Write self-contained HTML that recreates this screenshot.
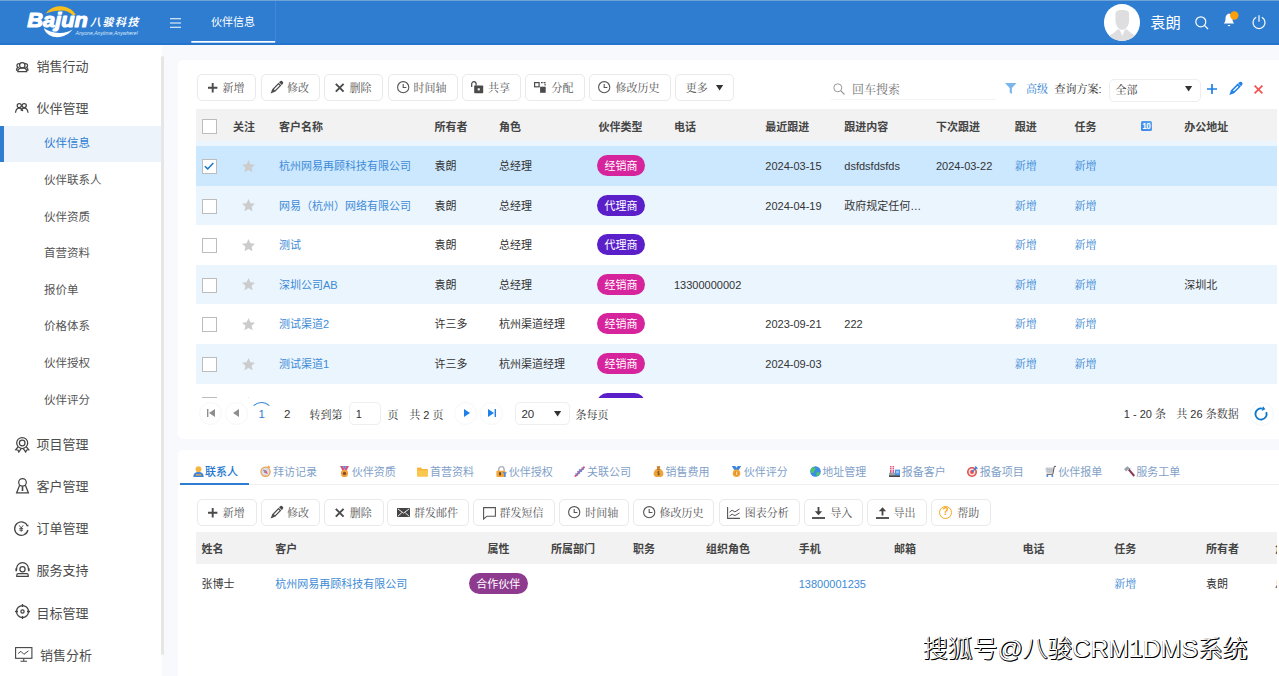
<!DOCTYPE html>
<html lang="zh-CN">
<head>
<meta charset="utf-8">
<title>伙伴信息</title>
<style>
*{box-sizing:border-box;margin:0;padding:0}
html,body{width:1279px;height:676px;overflow:hidden}
body{position:relative;background:#f7f9fc;font-family:"Liberation Sans","Noto Sans CJK SC",sans-serif;font-size:11px;color:#333}
.abs{position:absolute}
svg{display:block;overflow:visible;position:absolute}
/* header */
#hd{z-index:5;position:absolute;left:0;top:0;width:1279px;height:45px;background:#2e7dd1;border-top:1px solid #6fa2d6;border-bottom:2px solid #2474cd}
#hd .tab{position:absolute;left:190px;top:0;width:86px;height:42px;border-right:1px solid #4388d6;border-left:1px solid #2e7dd1;color:#fff;font-size:11px;line-height:43.400px;text-align:center}
/* sidebar */
#sb{position:absolute;left:0;top:44px;width:162px;height:632px;background:#fff}
#sb .m{position:absolute;left:36.500px;margin-top:.5px;font-size:13px;color:#4d4d4d;line-height:20px;height:20px;white-space:nowrap}
#sb .s{position:absolute;left:44px;font-size:11.5px;color:#555;line-height:20px;height:20px;white-space:nowrap}
#sb .act{position:absolute;left:0;top:82px;width:162px;height:36px;background:#edf3fa;border-left:4px solid #2e7dd1}
#sbar{position:absolute;left:161px;top:56px;width:3.300px;height:599px;background:#e6e6e6;border-radius:2px}
/* cards */
.card{position:absolute;background:#fff;border-radius:5px 0 0 5px;overflow:hidden}
.sf,.btn{font-family:"Liberation Sans","Noto Serif CJK SC",serif}
.btn{position:absolute;height:27px;border:1px solid #e9e9e9;border-radius:5px;background:#fff;color:#555;font-size:11px;line-height:25px;white-space:nowrap}
.btn span{position:absolute;top:1px;margin-left:-.5px}
.th{position:absolute;font-weight:bold;color:#444;font-size:11px;line-height:16px;white-space:nowrap}
.td{position:absolute;color:#333;font-size:11px;line-height:16px;white-space:nowrap}
.lk{color:#3d8bd6}
.lk.sf{color:#3383d2}
.cb{position:absolute;width:15px;height:15px;border:1px solid #bcbcbc;background:#fff}
.bdg{position:absolute;height:21px;border-radius:11px;color:#fff;font-size:11px;line-height:22.400px;text-align:center;white-space:nowrap}
.row{position:absolute;left:0;width:1081px}
.circ{position:absolute;width:23px;height:23px;border-radius:50%;border:1px solid #f7f7f7;background:#fff}
.tabt{position:absolute;font-size:11px;line-height:16px;color:#7f9fc8;white-space:nowrap}
</style>
</head>
<body>
<!-- ================= HEADER ================= -->
<div id="hd">
  <!-- logo -->
  <svg style="left:20px;top:1px" width="130" height="42" viewBox="0 0 130 42">
    <path transform="translate(0 -.9)" d="M25.900 12.400C30 6.500 36 5 41 5.100 47 5.200 53 8.500 55.700 13.700L52.900 14.200C50 11 46 9.300 41.700 9.300 36 9.300 30 10.500 25.900 12.400z" fill="#f9be19"/>
    <path transform="translate(-.2 -.9)" d="M23.900 26.900C26 33.500 32 36.100 37.600 36.100 44 36.100 50 32.500 52.900 28.200 49 31 44 32 39.500 31.800 33 31.500 28 30 23.900 26.900z" fill="#fff"/>
    <text x="7.300" y="24.600" font-family="Liberation Sans, sans-serif" font-size="21" font-weight="bold" font-style="italic" fill="#fff" stroke="#fff" stroke-width="1.150" stroke-linejoin="round" textLength="60.500" lengthAdjust="spacingAndGlyphs">Bajun</text>
    <text x="70" y="23.700" font-family="Liberation Sans, Noto Sans CJK SC, sans-serif" font-size="10.900" font-weight="bold" font-style="italic" fill="#fff" textLength="48.300" lengthAdjust="spacing">八骏科技</text>
    <text x="55.500" y="33.200" font-family="Liberation Sans, sans-serif" font-size="5.200" font-style="italic" fill="#d9e8f8" textLength="62.500" lengthAdjust="spacingAndGlyphs">Anyone,Anytime,Anywhere!</text>
  </svg>
  <!-- hamburger -->
  <svg style="left:169.500px;top:17px" width="11" height="10" viewBox="0 0 11 10"><path d="M0 .8h11M0 5h11M0 9.200h11" stroke="#fff" stroke-width="1.100"/></svg>
  <div class="tab">伙伴信息</div>
  <svg style="left:190.800px;top:40.400px" width="84.400" height="1.700" viewBox="0 0 84.400 1.700"><rect width="84.400" height="1.700" fill="#fff"/></svg>
  <!-- avatar -->
  <div class="abs" style="left:1103.700px;top:2.700px;width:36.600px;height:37px;border-radius:50%;background:#fff;overflow:hidden">
    <svg style="left:0;top:0" width="36.600" height="37" viewBox="0 0 36.600 36.600" preserveAspectRatio="none"><path d="M4 36.600C4.500 32 6 30.500 9 29.300L13.900 25l1.900.5 2.500 6.100 2.500-6.100 1.900-.5 4.900 4.300c3 1.200 4.500 2.700 5 7.300z" fill="#dedee0"/><path d="M11.500 10c0-3 2-4 6.800-4s6.800 1 6.800 4v6c0 5-3.100 9.500-6.800 9.500S11.500 21 11.500 16z" fill="#dedee0"/></svg>
  </div>
  <div class="abs" style="left:1150.300px;top:11px;font-size:15.300px;line-height:22px;color:#fff;white-space:nowrap">袁朗</div>
  <!-- search -->
  <svg style="left:1194.500px;top:14.500px" width="14" height="14" viewBox="0 0 14 14"><circle cx="5.800" cy="5.800" r="5" fill="none" stroke="#fff" stroke-width="1.200"/><path d="M9.400 9.400l3.600 3.600" stroke="#fff" stroke-width="1.300"/></svg>
  <!-- bell -->
  <svg style="left:1223px;top:10px" width="16" height="18" viewBox="0 0 16 18"><path d="M6 2.500c-2.300.5-3.500 2.500-3.500 5 0 3-.8 4-1.800 5h10.600c-1-1-1.800-2-1.800-5 0-2.500-1.200-4.500-3.500-5z" fill="#fff"/><path d="M4.700 14h2.600a1.300 1.300 0 0 1-2.600 0z" fill="#fff"/><circle cx="11.300" cy="4.500" r="4.200" fill="#fba00b"/></svg>
  <!-- power -->
  <svg style="left:1252px;top:14px" width="14" height="14" viewBox="0 0 14 14"><path d="M4.200 2.300a6 6 0 1 0 5.600 0" fill="none" stroke="#fff" stroke-width="1.200"/><path d="M7 .3v6.500" stroke="#fff" stroke-width="1.200"/></svg>
</div>

<!-- ================= SIDEBAR ================= -->
<div id="sb">
  <div class="act"></div>
  <!-- icons (page y = 44 + top) -->
  <svg style="left:16px;top:17.500px" width="12.500" height="10" viewBox="0 0 12.500 10" fill="none" stroke="#444" stroke-width="1.250"><circle cx="6.250" cy="3.300" r="2.700"/><path d="M1.800 9.500c0-2.600 2-3.700 4.450-3.700s4.450 1.100 4.450 3.700z"/><path d="M3.700 1.800C2 1.300.9 2.400.9 3.600c0 .9.500 1.500 1.200 1.800C1 5.900.5 6.800.5 8.200h1.300M8.800 1.800c1.700-.5 2.800.6 2.800 1.800 0 .9-.5 1.500-1.200 1.800 1.100.5 1.600 1.400 1.600 2.800h-1.300"/></svg>
  <svg style="left:15.300px;top:58.500px" width="13.500" height="10" viewBox="0 0 13.500 10" fill="none" stroke="#444" stroke-width="1.250"><circle cx="4.300" cy="2.600" r="2.100"/><circle cx="9.200" cy="2.600" r="2.100"/><path d="M.5 9.700c.3-3 1.800-4.700 3.800-4.700s3 1.300 3.500 3.200M6 7.800C6.600 6 7.700 5 9.200 5c2 0 3.500 1.700 3.800 4.700"/></svg>
  <svg style="left:15px;top:392.500px" width="14.500" height="15.500" viewBox="0 0 14.500 15.500" fill="none" stroke="#444" stroke-width="1.250"><circle cx="7.200" cy="6" r="5.500"/><circle cx="7.200" cy="6" r="2.800"/><path d="M3 9.800L.7 12.800l2.200.2.900 2 2.400-3.400M11.400 9.800l2.400 3-2.200.2-.9 2-2.400-3.400"/></svg>
  <svg style="left:15.800px;top:433.800px" width="13" height="15.500" viewBox="0 0 13 15.500" fill="none" stroke="#444" stroke-width="1.250"><circle cx="6.500" cy="4.300" r="3.800"/><path d="M3.600 7.200L.6 14.900h11.800L9.400 7.200"/><path d="M6.500 8.500v4.500" stroke-width="1.600"/></svg>
  <svg style="left:14.300px;top:476.800px" width="15" height="14.500" viewBox="0 0 15 14.500" fill="none" stroke="#444" stroke-width="1.250"><path d="M13.600 5.200A6.700 6.700 0 1 0 13.900 9"/><path d="M12.600 4.300l1.600 1.400.3-2.200z" fill="#444" stroke="none"/><path d="M5.200 4.300l2 2.700 2-2.700M7.200 7v3.800M5.300 7.600h3.800M5.300 9.200h3.800" stroke-width=".9"/></svg>
  <svg style="left:14.600px;top:518px" width="15" height="15" viewBox="0 0 15 15" fill="none" stroke="#444" stroke-width="1.250"><path d="M1.600 8.200V6.600a5.900 5.900 0 0 1 11.800 0v1.600"/><path d="M1.200 6.200v3M13.800 6.200v3" stroke-width="1.600"/><circle cx="7.500" cy="7.300" r="2.600"/><path d="M1.800 14.400v-1.300c0-.9.700-1.600 1.600-1.600h8.200c.9 0 1.600.7 1.600 1.600v1.300z"/></svg>
  <svg style="left:14.500px;top:560.200px" width="15" height="15" viewBox="0 0 15 15" fill="none" stroke="#444" stroke-width="1.250"><circle cx="7.500" cy="7.500" r="6"/><circle cx="7.500" cy="7.500" r="1.600"/><path d="M7.500 0v3M7.500 12v3M0 7.500h3M12 7.500h3" stroke-width="1.300"/></svg>
  <svg style="left:14.700px;top:603px" width="17.500" height="15" viewBox="0 0 17.500 15" fill="none" stroke="#444" stroke-width="1.100"><rect x=".6" y=".6" width="16.300" height="10.700"/><path d="M3.200 6.500l2.700-2.200 3 3 4.600-3.500" stroke-width="1"/><path d="M8.750 11.400v2.600M5.500 14.300h6.500"/></svg>

  <div class="m" style="top:12px">销售行动</div>
  <div class="m" style="top:54px">伙伴管理</div>
  <div class="s" style="top:89px;color:#2e7dd1">伙伴信息</div>
  <div class="s" style="top:126px">伙伴联系人</div>
  <div class="s" style="top:163px">伙伴资质</div>
  <div class="s" style="top:199px">首营资料</div>
  <div class="s" style="top:236px">报价单</div>
  <div class="s" style="top:272px">价格体系</div>
  <div class="s" style="top:309px">伙伴授权</div>
  <div class="s" style="top:346px">伙伴评分</div>
  <div class="m" style="top:390px">项目管理</div>
  <div class="m" style="top:432px">客户管理</div>
  <div class="m" style="top:474px">订单管理</div>
  <div class="m" style="top:516px">服务支持</div>
  <div class="m" style="top:559px">目标管理</div>
  <div class="m" style="top:601px;left:40px">销售分析</div>
</div>
<div id="sbar"></div>

<!-- ================= CARD 1 ================= -->
<div class="card" style="left:177.5px;top:60px;width:1110px;height:379px"></div>
<div class="btn" style="left:197px;top:74.3px;width:59.4px"><svg style="left:9.5px;top:7.500px" width="9.400" height="9.400" viewBox="0 0 9.400 9.400"><path d="M4.700 0v9.400M0 4.700h9.400" stroke="#4a4a4a" stroke-width="1.900" fill="none"/></svg><span style="left:25px">新增</span></div>
<div class="btn" style="left:260.6px;top:74.3px;width:59.4px"><svg style="left:8px;top:5.600px" width="13.200" height="13" viewBox="0 0 13.200 13"><g transform="translate(6.600 6.500) rotate(45) scale(1.08 1.12)" fill="#4a4a4a"><path d="M-1.800-4.800v-1a1.800 1.800 0 0 1 3.600 0v1z"/><rect x="-1.250" y="-3.700" width="2.500" height="7" fill="none" stroke="#4a4a4a" stroke-width="1.100"/><path d="M-1.800 3.700h3.600L0 7.500z"/></g></svg><span style="left:26px">修改</span></div>
<div class="btn" style="left:324px;top:74.3px;width:59.4px"><svg style="left:10px;top:8px" width="9.400" height="9.400" viewBox="0 0 9.400 9.400"><path d="M.8.800l7.800 7.800M8.600.800L.8 8.600" stroke="#4a4a4a" stroke-width="1.900" fill="none"/></svg><span style="left:25px">删除</span></div>
<div class="btn" style="left:387.6px;top:74.3px;width:70.8px"><svg style="left:8px;top:6px" width="12.400" height="12.400" viewBox="0 0 12.400 12.400"><circle cx="6.200" cy="6.200" r="5.600" fill="none" stroke="#555" stroke-width="1.100"/><path d="M6.200 3v3.500h3.200" fill="none" stroke="#555" stroke-width="1.100"/></svg><span style="left:25.5px">时间轴</span></div>
<div class="btn" style="left:462.3px;top:74.3px;width:59px"><svg style="left:7.3px;top:5.900px" width="12.200" height="12.200" viewBox="0 0 12.200 12.200"><path d="M.7 5.900V2.900a2.200 2.200 0 0 1 4.400 0v1.800" fill="none" stroke="#4a4a4a" stroke-width="1.200"/><rect x="3.200" y="4.600" width="9" height="7.600" rx=".6" fill="#4a4a4a"/><rect x="6.700" y="7.300" width="2.100" height="2.100" fill="#fff"/></svg><span style="left:25.3px">共享</span></div>
<div class="btn" style="left:525.4px;top:74.3px;width:59.6px"><svg style="left:7.5px;top:6.300px" width="11.700" height="10.800" viewBox="0 0 11.700 10.800"><rect x=".6" y=".6" width="4.500" height="4.200" fill="none" stroke="#4a4a4a" stroke-width="1.200"/><rect x="6.100" y="4.700" width="5.600" height="6.100" fill="#4a4a4a"/><path d="M7 .6h4.100v3.200" fill="none" stroke="#4a4a4a" stroke-width="1.200" stroke-dasharray="1.700 .9"/></svg><span style="left:25.6px">分配</span></div>
<div class="btn" style="left:589px;top:74.3px;width:81.5px"><svg style="left:8px;top:6px" width="12.400" height="12.400" viewBox="0 0 12.400 12.400"><circle cx="6.200" cy="6.200" r="5.600" fill="none" stroke="#555" stroke-width="1.100"/><path d="M6.200 3v3.500h3.200" fill="none" stroke="#555" stroke-width="1.100"/></svg><span style="left:26px">修改历史</span></div>
<div class="btn" style="left:674.6px;top:74.3px;width:59.2px"><span style="left:10.6px">更多</span><svg style="left:40.300px;top:10.200px" width="7.200" height="5.600" viewBox="0 0 8 6"><path d="M0 0h8L4 6z" fill="#333"/></svg></div>
<svg style="left:832.5px;top:82.5px" width="12" height="12" viewBox="0 0 12 12"><circle cx="4.8" cy="4.8" r="4" fill="none" stroke="#999" stroke-width="1"/><path d="M7.7 7.7l3.8 3.8" stroke="#999" stroke-width="1.1"/></svg>
<div class="abs sf" style="left:852px;top:81.600px;font-size:12px;line-height:16px;color:#757575;white-space:nowrap">回车搜索</div>
<div class="abs" style="left:831px;top:99px;width:165px;height:1px;background:#f4f4f4"></div>
<svg style="left:1005px;top:83px" width="12" height="11" viewBox="0 0 12 11"><path d="M0 0h11.600L6.900 5V11L4.700 9.500V5z" fill="#7ab5eb"/></svg>
<div class="abs sf" style="left:1026px;top:80.5px;font-size:11px;line-height:16px;color:#2f80d0;white-space:nowrap">高级</div>
<div class="abs sf" style="left:1054.5px;top:80.5px;font-size:11px;line-height:16px;color:#333;white-space:nowrap">查询方案:</div>
<div class="abs" style="left:1109px;top:78.5px;width:91.5px;height:23px;border:1px solid #eee;border-radius:5px;background:#fff"></div>
<div class="abs sf" style="left:1115.5px;top:81.5px;font-size:11px;line-height:16px;color:#333">全部</div>
<svg style="left:1185.200px;top:86.200px" width="7.200" height="5.600" viewBox="0 0 8 6"><path d="M0 0h8L4 6z" fill="#333"/></svg>
<svg style="left:1207px;top:83.5px" width="10" height="10" viewBox="0 0 10 10"><path d="M5 0v10M0 5h10" stroke="#1e80e8" stroke-width="1.7" fill="none"/></svg>
<svg style="left:1228.700px;top:82px" width="13.200" height="13" viewBox="0 0 13.200 13"><g transform="translate(6.600 6.700) rotate(45) scale(1.150 1.180)" fill="#1e80e8"><path d="M-1.800-4.800v-1a1.800 1.800 0 0 1 3.600 0v1z"/><rect x="-1.250" y="-3.700" width="2.500" height="7" fill="none" stroke="#1e80e8" stroke-width="1.350"/><path d="M-1.800 3.700h3.600L0 7.500z"/></g></svg>
<svg style="left:1253.5px;top:84.5px" width="9" height="9" viewBox="0 0 9 9"><path d="M.6.6l7.8 7.8M8.4.6L.6 8.4" stroke="#f4544f" stroke-width="1.7" fill="none"/></svg>
<div class="abs" style="left:195.5px;top:109px;width:1081.5px;height:32px;background:#f2f2f2"></div>
<div class="cb" style="left:202px;top:119px"></div>
<div class="th" style="left:233px;top:118.6px">关注</div>
<div class="th" style="left:279px;top:118.6px">客户名称</div>
<div class="th" style="left:434.6px;top:118.6px">所有者</div>
<div class="th" style="left:499px;top:118.6px">角色</div>
<div class="th" style="left:598.5px;top:118.6px">伙伴类型</div>
<div class="th" style="left:674px;top:118.6px">电话</div>
<div class="th" style="left:765.3px;top:118.6px">最近跟进</div>
<div class="th" style="left:844.3px;top:118.6px">跟进内容</div>
<div class="th" style="left:936px;top:118.6px">下次跟进</div>
<div class="th" style="left:1014.7px;top:118.6px">跟进</div>
<div class="th" style="left:1074.5px;top:118.6px">任务</div>
<div class="th" style="left:1184.2px;top:118.6px">办公地址</div>
<div class="abs" style="left:1141px;top:120.700px;width:11px;height:10.800px;border-radius:1.600px;background:linear-gradient(45deg,#3a82e6,#57aaf1);color:#fff;font-family:Liberation Sans,sans-serif;font-weight:bold;font-size:8.200px;line-height:11.200px;text-align:center;letter-spacing:-.4px;text-indent:-.4px;overflow:hidden">10</div>
<div class="abs" style="left:195.5px;top:141px;width:1081.5px;height:257.3px;overflow:hidden">
<div class="row" style="top:-34.7px;height:39.6px;background:#eaf5fe;width:1081.5px"></div>
<div class="row" style="top:4.9px;height:39.9px;background:#cce8ff;width:1081.5px">
<div class="cb" style="left:6.5px;top:13.0px"><svg style="left:1.400px;top:2.400px" width="10" height="8" viewBox="0 0 10 8"><path d="M.8 4.2l2.9 2.7L9.3.9" fill="none" stroke="#1878c8" stroke-width="1.5"/></svg></div>
<svg style="left:46.2px;top:13.8px" width="13" height="12" viewBox="0 0 13 12"><path d="M6.5 0l1.9 4.2 4.6.5-3.4 3.1.95 4.5L6.5 10 2.45 12.3l.95-4.5L0 4.7l4.6-.5z" fill="#ccc"/></svg>
<div class="td lk" style="left:83.5px;top:12.2px">杭州网易再顾科技有限公司</div>
<div class="td" style="left:239.1px;top:12.2px">袁朗</div>
<div class="td" style="left:303.5px;top:12.2px">总经理</div>
<div class="bdg" style="left:401.3px;top:9.0px;width:48.6px;background:#d6249c">经销商</div>
<div class="td" style="left:569.8px;top:12.2px">2024-03-15</div>
<div class="td" style="left:648.8px;top:12.2px">dsfdsfdsfds</div>
<div class="td" style="left:740.5px;top:12.2px">2024-03-22</div>
<div class="td lk sf" style="left:819.2px;top:12.2px">新增</div>
<div class="td lk sf" style="left:879.0px;top:12.2px">新增</div>
</div>
<div class="row" style="top:44.5px;height:39.9px;background:#eaf5fe;width:1081.5px">
<div class="cb" style="left:6.5px;top:13.0px"></div>
<svg style="left:46.2px;top:13.8px" width="13" height="12" viewBox="0 0 13 12"><path d="M6.5 0l1.9 4.2 4.6.5-3.4 3.1.95 4.5L6.5 10 2.45 12.3l.95-4.5L0 4.7l4.6-.5z" fill="#ccc"/></svg>
<div class="td lk" style="left:83.5px;top:12.2px">网易（杭州）网络有限公司</div>
<div class="td" style="left:239.1px;top:12.2px">袁朗</div>
<div class="td" style="left:303.5px;top:12.2px">总经理</div>
<div class="bdg" style="left:401.3px;top:9.0px;width:48.6px;background:#5a1fc9">代理商</div>
<div class="td" style="left:569.8px;top:12.2px">2024-04-19</div>
<div class="td" style="left:648.8px;top:12.2px">政府规定任何…</div>
<div class="td lk sf" style="left:819.2px;top:12.2px">新增</div>
<div class="td lk sf" style="left:879.0px;top:12.2px">新增</div>
</div>
<div class="row" style="top:84.1px;height:39.9px;background:#ffffff;width:1081.5px">
<div class="cb" style="left:6.5px;top:13.0px"></div>
<svg style="left:46.2px;top:13.8px" width="13" height="12" viewBox="0 0 13 12"><path d="M6.5 0l1.9 4.2 4.6.5-3.4 3.1.95 4.5L6.5 10 2.45 12.3l.95-4.5L0 4.7l4.6-.5z" fill="#ccc"/></svg>
<div class="td lk" style="left:83.5px;top:12.2px">测试</div>
<div class="td" style="left:239.1px;top:12.2px">袁朗</div>
<div class="td" style="left:303.5px;top:12.2px">总经理</div>
<div class="bdg" style="left:401.3px;top:9.0px;width:48.6px;background:#5a1fc9">代理商</div>
<div class="td lk sf" style="left:819.2px;top:12.2px">新增</div>
<div class="td lk sf" style="left:879.0px;top:12.2px">新增</div>
</div>
<div class="row" style="top:123.7px;height:39.9px;background:#eaf5fe;width:1081.5px">
<div class="cb" style="left:6.5px;top:13.0px"></div>
<svg style="left:46.2px;top:13.8px" width="13" height="12" viewBox="0 0 13 12"><path d="M6.5 0l1.9 4.2 4.6.5-3.4 3.1.95 4.5L6.5 10 2.45 12.3l.95-4.5L0 4.7l4.6-.5z" fill="#ccc"/></svg>
<div class="td lk" style="left:83.5px;top:12.2px">深圳公司AB</div>
<div class="td" style="left:239.1px;top:12.2px">袁朗</div>
<div class="td" style="left:303.5px;top:12.2px">总经理</div>
<div class="bdg" style="left:401.3px;top:9.0px;width:48.6px;background:#d6249c">经销商</div>
<div class="td" style="left:478.5px;top:12.2px">13300000002</div>
<div class="td lk sf" style="left:819.2px;top:12.2px">新增</div>
<div class="td lk sf" style="left:879.0px;top:12.2px">新增</div>
<div class="td" style="left:988.7px;top:12.2px">深圳北</div>
</div>
<div class="row" style="top:163.3px;height:39.9px;background:#ffffff;width:1081.5px">
<div class="cb" style="left:6.5px;top:13.0px"></div>
<svg style="left:46.2px;top:13.8px" width="13" height="12" viewBox="0 0 13 12"><path d="M6.5 0l1.9 4.2 4.6.5-3.4 3.1.95 4.5L6.5 10 2.45 12.3l.95-4.5L0 4.7l4.6-.5z" fill="#ccc"/></svg>
<div class="td lk" style="left:83.5px;top:12.2px">测试渠道2</div>
<div class="td" style="left:239.1px;top:12.2px">许三多</div>
<div class="td" style="left:303.5px;top:12.2px">杭州渠道经理</div>
<div class="bdg" style="left:401.3px;top:9.0px;width:48.6px;background:#d6249c">经销商</div>
<div class="td" style="left:569.8px;top:12.2px">2023-09-21</div>
<div class="td" style="left:648.8px;top:12.2px">222</div>
<div class="td lk sf" style="left:819.2px;top:12.2px">新增</div>
<div class="td lk sf" style="left:879.0px;top:12.2px">新增</div>
</div>
<div class="row" style="top:202.9px;height:39.9px;background:#eaf5fe;width:1081.5px">
<div class="cb" style="left:6.5px;top:13.0px"></div>
<svg style="left:46.2px;top:13.8px" width="13" height="12" viewBox="0 0 13 12"><path d="M6.5 0l1.9 4.2 4.6.5-3.4 3.1.95 4.5L6.5 10 2.45 12.3l.95-4.5L0 4.7l4.6-.5z" fill="#ccc"/></svg>
<div class="td lk" style="left:83.5px;top:12.2px">测试渠道1</div>
<div class="td" style="left:239.1px;top:12.2px">许三多</div>
<div class="td" style="left:303.5px;top:12.2px">杭州渠道经理</div>
<div class="bdg" style="left:401.3px;top:9.0px;width:48.6px;background:#d6249c">经销商</div>
<div class="td" style="left:569.8px;top:12.2px">2024-09-03</div>
<div class="td lk sf" style="left:819.2px;top:12.2px">新增</div>
<div class="td lk sf" style="left:879.0px;top:12.2px">新增</div>
</div>
<div class="row" style="top:242.5px;height:39.9px;background:#ffffff;width:1081.5px">
<div class="cb" style="left:6.5px;top:13.0px"></div>
<svg style="left:46.2px;top:13.8px" width="13" height="12" viewBox="0 0 13 12"><path d="M6.5 0l1.9 4.2 4.6.5-3.4 3.1.95 4.5L6.5 10 2.45 12.3l.95-4.5L0 4.7l4.6-.5z" fill="#ccc"/></svg>
<div class="td lk" style="left:83.5px;top:12.2px">测试渠道</div>
<div class="td" style="left:239.1px;top:12.2px">许三多</div>
<div class="td" style="left:303.5px;top:12.2px">杭州渠道经理</div>
<div class="bdg" style="left:401.3px;top:9.0px;width:48.6px;background:#5a1fc9">代理商</div>
<div class="td" style="left:569.8px;top:12.2px">2024-09-03</div>
<div class="td lk sf" style="left:819.2px;top:12.2px">新增</div>
<div class="td lk sf" style="left:879.0px;top:12.2px">新增</div>
</div>
</div>
<div class="circ" style="left:199.3px;top:401.8px"><svg style="left:7px;top:6.5px" width="8" height="8" viewBox="0 0 8 8"><path d="M.7 0v8" stroke="#8e8e8e" stroke-width="1.4"/><path d="M8 0v8L2 4z" fill="#8e8e8e"/></svg></div>
<div class="circ" style="left:224.8px;top:401.8px"><svg style="left:7.5px;top:6.5px" width="6" height="8" viewBox="0 0 6 8"><path d="M6 0v8L0 4z" fill="#8e8e8e"/></svg></div>
<div class="abs" style="left:250.3px;top:401.5px;width:23px;height:23px;border-radius:50%;border:1px solid transparent;border-top-color:#3d8bd6"></div>
<div class="abs sf" style="left:258.5px;top:405.8px;font-size:11.5px;line-height:16px;color:#2f80d0">1</div>
<div class="abs sf" style="left:284px;top:405.8px;font-size:11.5px;line-height:16px;color:#333">2</div>
<div class="abs sf" style="left:309.5px;top:406.90000000000003px;font-size:11px;line-height:16px;color:#333;white-space:nowrap">转到第</div>
<div class="abs" style="left:349.2px;top:402.4px;width:32.2px;height:22.8px;border:1px solid #eee;border-radius:5px;background:#fff"></div>
<div class="abs sf" style="left:355.7px;top:405.8px;font-size:11px;line-height:16px;color:#333">1</div>
<div class="abs sf" style="left:387.5px;top:406.90000000000003px;font-size:11px;line-height:16px;color:#333">页</div>
<div class="abs sf" style="left:409.2px;top:406.90000000000003px;font-size:11px;line-height:16px;color:#333;white-space:nowrap">共 2 页</div>
<div class="circ" style="left:454.3px;top:401.8px"><svg style="left:8.5px;top:6.5px" width="6" height="8" viewBox="0 0 6 8"><path d="M0 0v8L6 4z" fill="#1e80e8"/></svg></div>
<div class="circ" style="left:479.8px;top:401.8px"><svg style="left:7px;top:6.5px" width="8" height="8" viewBox="0 0 8 8"><path d="M7.3 0v8" stroke="#1e80e8" stroke-width="1.4"/><path d="M0 0v8L6 4z" fill="#1e80e8"/></svg></div>
<div class="abs" style="left:515px;top:402.4px;width:54.6px;height:22.8px;border:1px solid #eee;border-radius:5px;background:#fff"></div>
<div class="abs sf" style="left:521.4px;top:405.5px;font-size:11.5px;line-height:16px;color:#333">20</div>
<svg style="left:554.300px;top:410.5px" width="7.200" height="5.600" viewBox="0 0 8 6"><path d="M0 0h8L4 6z" fill="#333"/></svg>
<div class="abs sf" style="left:575.5px;top:406.90000000000003px;font-size:11px;line-height:16px;color:#333;white-space:nowrap">条每页</div>
<div class="abs sf" style="left:1123.8px;top:406.0px;font-size:11px;line-height:16px;color:#333;white-space:nowrap">1 - 20 条</div>
<div class="abs sf" style="left:1176.3px;top:406.0px;font-size:11px;line-height:16px;color:#333;white-space:nowrap">共 26 条数据</div>
<div class="circ" style="left:1249.700px;top:401.500px;width:24.300px;height:24.300px;border-color:#f4f6fa"><svg style="left:3.500px;top:4.500px" width="14" height="14" viewBox="0 0 14 14"><path d="M12.260 5.080A5.600 5.600 0 1 1 8.450 1.590" fill="none" stroke="#0f77ca" stroke-width="1.900"/><path d="M11.300 2.300L9.050-.8 7.700 3.900z" fill="#0f77ca"/></svg></div>

<!-- ================= CARD 2 ================= -->
<div class="card" style="left:178px;top:449.7px;width:1110px;height:240px"></div>
<div class="abs" style="left:178px;top:484px;width:1101px;height:1px;background:#f0f0f0"></div>
<div class="abs" style="left:180.2px;top:483px;width:69px;height:2px;background:#2e7dd1"></div>
<svg style="left:193.3px;top:465.8px" width="11" height="11" viewBox="0 0 11 11"><path d="M.3 11c0-3.300 1.700-5 5.200-5s5.200 1.700 5.200 5z" fill="#3f82da"/><path d="M2.600 8.300h5.800v1.200H2.600z" fill="#f3b13e"/><circle cx="5.500" cy="3.200" r="2.900" fill="#f6b440"/></svg>
<div class="tabt" style="left:205px;top:463.5px;color:#2477cd;font-weight:500;">联系人</div>
<svg style="left:260px;top:465.8px" width="11" height="11" viewBox="0 0 11 11"><circle cx="5.500" cy="5.700" r="5.200" fill="#f0a04c"/><circle cx="5.500" cy="5.700" r="3.900" fill="#d9e0ea"/><path d="M3.200 3.400l3.300 1.300 1.300 3.300-3.300-1.300z" fill="#e0567c"/><path d="M3.200 3.400l3.300 1.300-2 2z" fill="#8a95a5"/><rect x="7.600" y="0" width="2.400" height="1.800" rx=".5" fill="#f0a04c" transform="rotate(40 8.800 .9)"/></svg>
<div class="tabt" style="left:273px;top:463.5px;">拜访记录</div>
<svg style="left:338.8px;top:465.8px" width="11" height="11" viewBox="0 0 11 11"><path d="M1 0h2.800L5.500 3.600 3.800 5.200zM10 0H7.200L5.500 3.600l1.700 1.600z" fill="#d9507c"/><path d="M3.800 0h3.400L5.500 3.600z" fill="#4f8fe0"/><circle cx="5.500" cy="7.400" r="3.600" fill="#f0a23a"/><circle cx="5.500" cy="7.400" r="1.700" fill="#8a4a2a"/></svg>
<div class="tabt" style="left:351.8px;top:463.5px;">伙伴资质</div>
<svg style="left:417.3px;top:465.8px" width="11" height="11" viewBox="0 0 11 11"><path d="M0 2.600c0-.6.500-1.100 1.100-1.100h2.900l1.200 1.400h4.700c.6 0 1.100.5 1.100 1.100v5.400c0 .6-.5 1.100-1.100 1.100H1.100C.5 10.500 0 10 0 9.400z" fill="#f6b73c"/><path d="M.2 4.600h10.800v4.800c0 .6-.5 1.100-1.100 1.100H1.300C.7 10.500.2 10 .2 9.400z" fill="#fbc84f"/></svg>
<div class="tabt" style="left:430px;top:463.5px;">首营资料</div>
<svg style="left:495.8px;top:465.8px" width="11" height="11" viewBox="0 0 11 11"><path d="M2.700 5.200V3.300a2.700 2.700 0 0 1 5.400 0v1.900" fill="none" stroke="#a9b0b9" stroke-width="1.400"/><rect x=".4" y="4.700" width="9" height="6.300" rx="1" fill="#f2a43a"/><rect x="3.300" y="6.300" width="1.500" height="3" fill="#3a3030"/><path d="M6.400 6.200h4.600L9.600 8v3H8V8z" fill="#4a8ae0"/></svg>
<div class="tabt" style="left:508.8px;top:463.5px;">伙伴授权</div>
<svg style="left:574.3px;top:465.8px" width="11" height="11" viewBox="0 0 11 11"><path d="M.6 10.400C4 9.400 3.500 7 5.500 5.500S9.500 2.500 10.400.6" fill="none" stroke="#e2507a" stroke-width="2"/><path d="M1.500 7.500l2 2M3.500 5l2.600 2.600M5.300 3.200L7.800 5.700M7.600 1.600l2 2" stroke="#4f8fe0" stroke-width="1.300"/></svg>
<div class="tabt" style="left:587px;top:463.5px;">关联公司</div>
<svg style="left:652.8px;top:465.8px" width="11" height="11" viewBox="0 0 11 11"><path d="M3.600.3h3.800L6.600 2.900H4.400z" fill="#c47c2c"/><path d="M5.500 2.600c3 0 4.900 3 4.900 5.300S8.500 11 5.500 11 .6 10.200.6 7.900 2.500 2.600 5.500 2.600z" fill="#eaa53c"/><path d="M4 3.300h3" stroke="#a8641e" stroke-width=".9"/><path d="M5.500 4.800v4.400M6.600 5.900c-.5-.6-2.200-.6-2.200.4s2.300.6 2.300 1.700-1.800 1-2.400.3" fill="none" stroke="#8a4f17" stroke-width=".8"/></svg>
<div class="tabt" style="left:665.5px;top:463.5px;">销售费用</div>
<svg style="left:731.3px;top:465.8px" width="11" height="11" viewBox="0 0 11 11"><path d="M.8 0h3.500l1.200 1.800L6.700 0h3.500L7.500 4.500h-4z" fill="#3f86e0"/><circle cx="5.500" cy="7.200" r="3.800" fill="#f2a93b"/><circle cx="5.500" cy="7.200" r="2.500" fill="#e8932a"/><path d="M5.700 5.600v3.400" stroke="#fff3d0" stroke-width=".9"/></svg>
<div class="tabt" style="left:743.8px;top:463.5px;">伙伴评分</div>
<svg style="left:809.8px;top:465.8px" width="11" height="11" viewBox="0 0 11 11"><circle cx="5.500" cy="5.500" r="5.300" fill="#3a8ce6"/><path d="M2.200 1.600c1.800-.8 3.200-.2 3.300 1.200S4.200 4.600 3.600 6.200 1.400 7.200.7 5.700 1 2.400 2.200 1.600zM6.800 6.400c1.200-.7 2.700-.2 3 .8s-.9 2.900-2.100 2.900-1.900-2.900-.9-3.700z" fill="#4fc46a"/></svg>
<div class="tabt" style="left:822.2px;top:463.5px;">地址管理</div>
<svg style="left:888.5px;top:465.8px" width="11" height="11" viewBox="0 0 11 11"><rect x="1" y="0" width="1.500" height="8" fill="#e0527c"/><rect x="3.600" y="0" width="1.500" height="8" fill="#e0527c"/><path d="M1 1.500h1.500M1 3.500h1.500M3.600 1.500h1.500M3.600 3.500h1.500" stroke="#fff" stroke-width=".6"/><rect x="0" y="6.700" width="6.400" height="3" fill="#9aa3ad"/><rect x="6" y="3.600" width="5" height="6.100" fill="#4f95e6"/><rect x="7.100" y="4.800" width="2.800" height="2.400" fill="#9dc8f5"/><rect x="0" y="9.300" width="11" height="1.700" fill="#4a4a4a"/></svg>
<div class="tabt" style="left:901.7px;top:463.5px;">报备客户</div>
<svg style="left:966.5px;top:465.8px" width="11" height="11" viewBox="0 0 11 11"><circle cx="5" cy="6" r="5" fill="#e2504d"/><circle cx="5" cy="6" r="3.400" fill="#fbe1e1"/><circle cx="5" cy="6" r="1.900" fill="#e2504d"/><path d="M5 6l4.600-4.600" stroke="#3f7fd6" stroke-width="1.300"/><path d="M7.700 0l.6 2.600 2.700.7L9.600 .8z" fill="#3f86e0"/></svg>
<div class="tabt" style="left:979.8px;top:463.5px;">报备项目</div>
<svg style="left:1045.3px;top:465.8px" width="11" height="11" viewBox="0 0 11 11"><path d="M.4 1.500h8.200L7.500 7H1.300z" fill="#d5d9df"/><path d="M.4 3.300h8M.8 5.100h7.200M2.600 1.500l.5 5.500M4.700 1.500v5.500M6.700 1.500l-.4 5.500" stroke="#a9b0b9" stroke-width=".5"/><path d="M11 .4H9.300L7.800 8.300H1.500" fill="none" stroke="#555" stroke-width="1"/><circle cx="2.300" cy="10" r="1" fill="#3f86e0"/><circle cx="7.300" cy="10" r="1" fill="#3f86e0"/></svg>
<div class="tabt" style="left:1058.3px;top:463.5px;">伙伴报单</div>
<svg style="left:1123.5px;top:465.8px" width="11" height="11" viewBox="0 0 11 11"><path d="M0 3.300L3.200.3l3.600 2.400-1.100 1.100-1.300-.5-2.200 2.200z" fill="#9aa3ad"/><path d="M4 4.300l1.500-1.500L11 9.300 9.500 10.800z" fill="#8a3a5a"/></svg>
<div class="tabt" style="left:1136.2px;top:463.5px;">服务工单</div>
<div class="btn" style="left:197.3px;top:499px;width:59.5px"><svg style="left:9.5px;top:7.500px" width="9.400" height="9.400" viewBox="0 0 9.400 9.400"><path d="M4.700 0v9.400M0 4.700h9.400" stroke="#4a4a4a" stroke-width="1.900" fill="none"/></svg><span style="left:25px">新增</span></div>
<div class="btn" style="left:260.5px;top:499px;width:59.5px"><svg style="left:8px;top:5.600px" width="13.200" height="13" viewBox="0 0 13.200 13"><g transform="translate(6.600 6.500) rotate(45) scale(1.08 1.12)" fill="#4a4a4a"><path d="M-1.800-4.800v-1a1.800 1.800 0 0 1 3.600 0v1z"/><rect x="-1.250" y="-3.700" width="2.500" height="7" fill="none" stroke="#4a4a4a" stroke-width="1.100"/><path d="M-1.800 3.700h3.600L0 7.500z"/></g></svg><span style="left:26px">修改</span></div>
<div class="btn" style="left:324.3px;top:499px;width:59.4px"><svg style="left:10px;top:8px" width="9.400" height="9.400" viewBox="0 0 9.400 9.400"><path d="M.8.800l7.800 7.800M8.600.800L.8 8.600" stroke="#4a4a4a" stroke-width="1.900" fill="none"/></svg><span style="left:25px">删除</span></div>
<div class="btn" style="left:387.3px;top:499px;width:81.8px"><svg style="left:8.7px;top:8px" width="13" height="9" viewBox="0 0 13 9"><rect width="13" height="9" fill="#444"/><path d="M.8.900l5.700 4.200L12.200.9M.8 8.300l4-3.600M12.200 8.300l-4-3.600" fill="none" stroke="#fff" stroke-width=".9"/></svg><span style="left:26.200px">群发邮件</span></div>
<div class="btn" style="left:473px;top:499px;width:81.5px"><svg style="left:8.7px;top:6.500px" width="13" height="13" viewBox="0 0 13 13"><path d="M.6.600h11.800v8.600H4L.6 12z" fill="none" stroke="#555" stroke-width="1.100"/></svg><span style="left:26px">群发短信</span></div>
<div class="btn" style="left:558.5px;top:499px;width:70px"><svg style="left:8.5px;top:6px" width="12.400" height="12.400" viewBox="0 0 12.400 12.400"><circle cx="6.200" cy="6.200" r="5.600" fill="none" stroke="#555" stroke-width="1.100"/><path d="M6.200 3v3.500h3.200" fill="none" stroke="#555" stroke-width="1.100"/></svg><span style="left:26.200px">时间轴</span></div>
<div class="btn" style="left:632.8px;top:499px;width:81.5px"><svg style="left:9px;top:6px" width="12.400" height="12.400" viewBox="0 0 12.400 12.400"><circle cx="6.200" cy="6.200" r="5.600" fill="none" stroke="#555" stroke-width="1.100"/><path d="M6.200 3v3.500h3.200" fill="none" stroke="#555" stroke-width="1.100"/></svg><span style="left:26.200px">修改历史</span></div>
<div class="btn" style="left:718.7px;top:499px;width:81.3px"><svg style="left:7.1px;top:6.500px" width="13" height="12" viewBox="0 0 13 12"><path d="M.6 0v11.400H13" fill="none" stroke="#555" stroke-width="1.100"/><path d="M2.500 5.200l2.600-2 2.800 1.700L12.500 2M2.500 9l2.600-1.800 2.800 1.400L12.500 6" fill="none" stroke="#555" stroke-width="1"/></svg><span style="left:25.600px">图表分析</span></div>
<div class="btn" style="left:803.7px;top:499px;width:59.7px"><svg style="left:7.3px;top:6.500px" width="13" height="12" viewBox="0 0 13 12"><path d="M6.500 0v5" stroke="#444" stroke-width="1.800"/><path d="M2.800 4.200h7.400L6.500 8.200z" fill="#444"/><path d="M0 11h13" stroke="#444" stroke-width="1.800"/></svg><span style="left:26px">导入</span></div>
<div class="btn" style="left:867px;top:499px;width:59.7px"><svg style="left:7.7px;top:6.500px" width="13" height="12" viewBox="0 0 13 12"><path d="M6.500 3.500v5" stroke="#444" stroke-width="1.800"/><path d="M2.800 4.300h7.400L6.500.3z" fill="#444"/><path d="M0 11h13" stroke="#444" stroke-width="1.800"/></svg><span style="left:26px">导出</span></div>
<div class="btn" style="left:930.5px;top:499px;width:60.2px"><div class="abs" style="left:7.5px;top:6px;width:13px;height:13px;border:1.500px solid #f7a81f;border-radius:50%;color:#f7a81f;font-family:Liberation Sans,sans-serif;font-size:10px;font-weight:bold;line-height:10.400px;text-align:center">?</div><span style="left:26.300px">帮助</span></div>
<div class="abs" style="left:195.500px;top:532px;width:1081px;height:32px;background:#f2f2f2"></div>
<div class="th" style="left:201.6px;top:541px">姓名</div>
<div class="th" style="left:275.2px;top:541px">客户</div>
<div class="th" style="left:487.5px;top:541px">属性</div>
<div class="th" style="left:551px;top:541px">所属部门</div>
<div class="th" style="left:632.9px;top:541px">职务</div>
<div class="th" style="left:706px;top:541px">组织角色</div>
<div class="th" style="left:798.7px;top:541px">手机</div>
<div class="th" style="left:894px;top:541px">邮箱</div>
<div class="th" style="left:1022.4px;top:541px">电话</div>
<div class="th" style="left:1114.2px;top:541px">任务</div>
<div class="th" style="left:1206px;top:541px">所有者</div>
<div class="abs" style="left:1275px;top:541px;width:2px;height:16px;overflow:hidden"><div class="th" style="left:0;top:0">角色</div></div>
<div class="td" style="left:201.600px;top:576px">张博士</div>
<div class="td lk" style="left:275.200px;top:576px">杭州网易再顾科技有限公司</div>
<div class="bdg" style="left:468.700px;top:573.400px;width:59px;background:#8e3b8f">合作伙伴</div>
<div class="td lk" style="left:798.700px;top:576px">13800001235</div>
<div class="td lk sf" style="left:1114.200px;top:576px">新增</div>
<div class="td" style="left:1206px;top:576px">袁朗</div>
<div class="abs" style="left:1275px;top:576px;width:2px;height:16px;overflow:hidden"><div class="td" style="left:0;top:0">总经理</div></div>

<!-- watermark -->
<div class="abs" id="wm" style="left:922.7px;top:632.8px;font-size:23.6px;line-height:32px;color:#fff;font-weight:300;text-shadow:1px 1px 0 #000,1px 0 0 #000,0 1px 0 #000;white-space:nowrap;transform:scaleX(1.052);transform-origin:0 0">搜狐号@八骏CRM1DMS系统</div>
</body>
</html>
